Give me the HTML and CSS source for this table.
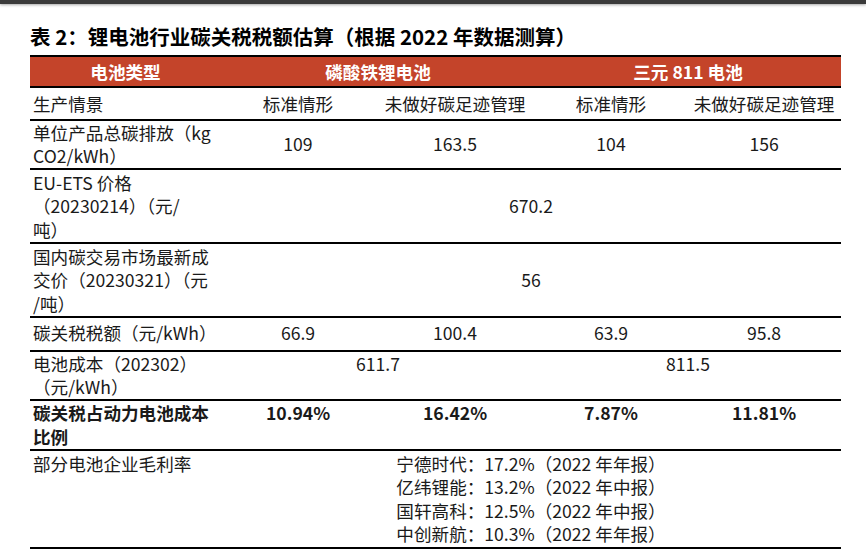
FILE: index.html
```html
<!DOCTYPE html>
<html lang="zh-CN">
<head>
<meta charset="utf-8">
<title>表 2：锂电池行业碳关税税额估算</title>
<link rel="stylesheet" href="styles.css">
</head>
<body>
<div class="topbar"></div>
<main class="page">
  <h1 class="title">表 2：锂电池行业碳关税税额估算（根据 2022 年数据测算）</h1>
  <table class="data">
    <colgroup>
      <col class="c-label">
      <col class="c1">
      <col class="c2">
      <col class="c3">
      <col class="c4">
    </colgroup>
    <thead>
      <tr>
        <th>电池类型</th>
        <th colspan="2">磷酸铁锂电池</th>
        <th colspan="2">三元 811 电池</th>
      </tr>
    </thead>
    <tbody>
      <tr class="r-scene">
        <td class="label">生产情景</td>
        <td>标准情形</td>
        <td>未做好碳足迹管理</td>
        <td>标准情形</td>
        <td>未做好碳足迹管理</td>
      </tr>
      <tr class="r-mid">
        <td class="label">单位产品总碳排放（kg<br>CO2/kWh）</td>
        <td>109</td>
        <td>163.5</td>
        <td>104</td>
        <td>156</td>
      </tr>
      <tr class="r-mid r-three">
        <td class="label">EU-ETS 价格<br>（20230214）（元/<br>吨）</td>
        <td colspan="4">670.2</td>
      </tr>
      <tr class="r-mid r-three">
        <td class="label">国内碳交易市场最新成<br>交价（20230321）（元<br>/吨）</td>
        <td colspan="4">56</td>
      </tr>
      <tr class="r-top r-tax">
        <td class="label">碳关税税额（元/kWh）</td>
        <td>66.9</td>
        <td>100.4</td>
        <td>63.9</td>
        <td>95.8</td>
      </tr>
      <tr class="r-top">
        <td class="label">电池成本（202302）<br>（元/kWh）</td>
        <td colspan="2">611.7</td>
        <td colspan="2">811.5</td>
      </tr>
      <tr class="r-top r-ratio">
        <td class="label">碳关税占动力电池成本<br>比例</td>
        <td>10.94%</td>
        <td>16.42%</td>
        <td>7.87%</td>
        <td>11.81%</td>
      </tr>
      <tr class="r-top r-margin">
        <td class="label">部分电池企业毛利率</td>
        <td colspan="4">
          <div class="list">
            <div>宁德时代：17.2%（2022 年年报）</div>
            <div>亿纬锂能：13.2%（2022 年中报）</div>
            <div>国轩高科：12.5%（2022 年中报）</div>
            <div>中创新航：10.3%（2022 年年报）</div>
          </div>
        </td>
      </tr>
    </tbody>
  </table>
</main>
</body>
</html>
```

FILE: styles.css
```css
html, body {
  margin: 0;
  padding: 0;
  background: #ffffff;
}

body {
  font-family: "Noto Sans CJK SC", "Noto Sans", sans-serif;
  color: #1a1a1a;
  width: 866px;
  height: 551px;
  overflow: hidden;
}

.topbar {
  height: 4px;
  background: #3b3b3b;
  box-shadow: 0 1px 3px rgba(0, 0, 0, 0.35);
}

.page {
  display: flex;
  flex-direction: column;
  padding-left: 30px;
}

.title {
  margin: 18px 0 0 0;
  font-size: 20.5px;
  line-height: 28px;
  font-weight: 700;
  color: #000;
  white-space: nowrap;
}

.data {
  margin-top: 5px;
  width: 811px;
  table-layout: fixed;
  border-collapse: separate;
  border-spacing: 0;
  font-size: 17.6px;
  line-height: 23.5px;
}

.c-label { width: 191px; }
.c1 { width: 154px; }
.c2 { width: 160px; }
.c3 { width: 152px; }
.c4 { width: 154px; }

.data th {
  background: #c4442a;
  color: #ffffff;
  font-weight: 700;
  height: 29px;
  line-height: 29px;
  padding: 0;
  text-align: center;
  border-top: 2px solid #000;
  border-bottom: 2px solid #000;
}

.data td {
  padding: 0 3px;
  text-align: center;
  border-bottom: 2px solid #000;
  white-space: nowrap;
}

.data td.label {
  text-align: left;
}

.r-scene td {
  padding-top: 4px;
  padding-bottom: 3px;
  vertical-align: middle;
}

.r-mid td {
  vertical-align: middle;
}

.r-three td {
  padding-top: 1px;
  padding-bottom: 0.5px;
}

.r-top td {
  vertical-align: top;
}

.r-tax td {
  padding-top: 3.5px;
  padding-bottom: 5px;
}

.r-ratio td {
  font-weight: 700;
  padding-top: 0.5px;
  padding-bottom: 0.5px;
}

.r-margin td {
  padding-top: 1px;
  padding-bottom: 1px;
}

.list {
  display: inline-block;
  text-align: left;
}
```
